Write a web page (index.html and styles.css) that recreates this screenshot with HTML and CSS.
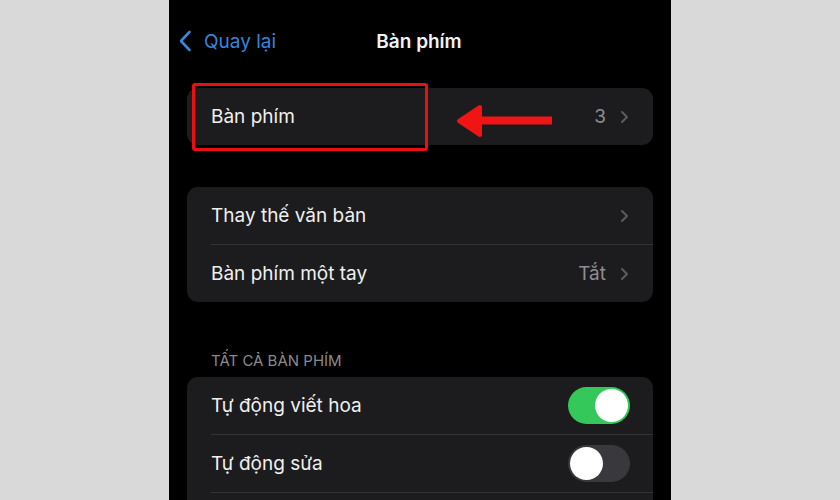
FILE: index.html
```
<!DOCTYPE html>
<html lang="vi">
<head>
    <meta charset="UTF-8">
    <title>Bàn phím</title>
    <link rel="stylesheet" href="styles.css">
</head>
<body>
<div class="phone">
    <div class="nav">
        <div class="nav-back">
            <svg class="back-icon" width="14" height="22" viewBox="0 0 14 22">
                <path d="M11.5 2 L3 11 L11.5 20" fill="none" stroke="#3a84dc" stroke-width="2.6" stroke-linecap="round" stroke-linejoin="round"/>
            </svg>
            <span>Quay lại</span>
        </div>
        <div class="nav-title">Bàn phím</div>
        <div></div>
    </div>

    <div class="card first">
        <div class="row">
            <div class="row-body">
                <span class="label">Bàn phím</span>
                <span class="value">3</span>
                <svg class="chev" width="9" height="14" viewBox="0 0 9 14"><path d="M2 2 L7 7 L2 12" fill="none" stroke="#5c5c60" stroke-width="2" stroke-linecap="round" stroke-linejoin="round"/></svg>
            </div>
        </div>
    </div>

    <div class="card">
        <div class="row">
            <div class="row-body">
                <span class="label">Thay thế văn bản</span>
                <svg class="chev" width="9" height="14" viewBox="0 0 9 14"><path d="M2 2 L7 7 L2 12" fill="none" stroke="#5c5c60" stroke-width="2" stroke-linecap="round" stroke-linejoin="round"/></svg>
            </div>
        </div>
        <div class="row">
            <div class="row-body">
                <span class="label">Bàn phím một tay</span>
                <span class="value">Tắt</span>
                <svg class="chev" width="9" height="14" viewBox="0 0 9 14"><path d="M2 2 L7 7 L2 12" fill="none" stroke="#5c5c60" stroke-width="2" stroke-linecap="round" stroke-linejoin="round"/></svg>
            </div>
        </div>
    </div>

    <div class="section-title">TẤT CẢ BÀN PHÍM</div>
    <div class="card">
        <div class="row">
            <div class="row-body">
                <span class="label">Tự động viết hoa</span>
                <span class="toggle on"><span class="knob"></span></span>
            </div>
        </div>
        <div class="row">
            <div class="row-body">
                <span class="label">Tự động sửa</span>
                <span class="toggle"><span class="knob"></span></span>
            </div>
        </div>
        <div class="row">
            <div class="row-body"></div>
        </div>
    </div>

    <!-- chu thich mau do -->
    <div class="mark-box"></div>
    <svg class="mark-arrow" width="98" height="32" viewBox="0 0 98 32">
        <rect x="18" y="11.5" width="78" height="8" fill="#f01414"/>
        <path d="M3 16 L24 2 L24 30 Z" fill="#f01414" stroke="#f01414" stroke-width="4" stroke-linejoin="round"/>
    </svg>
</div>
</body>
</html>
```

FILE: styles.css
```
html, body {
    margin: 0;
    padding: 0;
}

body {
    background: #d9d9d9;
    font-family: Inter, "Noto Sans", "DejaVu Sans", sans-serif;
}

.phone {
    position: relative;
    width: 502px;
    height: 500px;
    margin: 0 auto;
    padding: 0 18px;
    box-sizing: border-box;
    background: #000;
    overflow: hidden;
}

.nav {
    height: 82px;
    display: grid;
    grid-template-columns: 1fr auto 1fr;
    align-items: center;
    margin-left: -9px;
    margin-right: 9px;
}

.nav-back {
    display: flex;
    align-items: center;
    gap: 12px;
    color: #3a84dc;
    font-size: 19px;
}

.back-icon {
    display: block;
}

.nav-title {
    color: #f2f2f2;
    font-size: 19px;
    font-weight: 600;
    padding-left: 16px;
}

.card {
    background: #1c1c1e;
    border-radius: 11px;
    margin-top: 42px;
    overflow: hidden;
}

.card.first {
    margin-top: 6px;
}

.row {
    padding-left: 24px;
}

.row-body {
    height: 57px;
    display: flex;
    align-items: center;
    padding-right: 24px;
}

.row + .row .row-body {
    border-top: 1px solid #333336;
}

.label {
    flex: 1;
    color: #f0f0f0;
    font-size: 19px;
}

.value {
    color: #8e8e93;
    font-size: 19px;
    margin-right: 14px;
}

.chev {
    display: block;
}

.section-title {
    margin-top: 48px;
    margin-bottom: 5px;
    padding-left: 24px;
    line-height: 22px;
    color: #8a8a8e;
    font-size: 15px;
}

.section-title + .card {
    margin-top: 0;
}

.toggle {
    position: relative;
    width: 62px;
    height: 37px;
    border-radius: 19px;
    background: #39393d;
    margin-right: -1px;
}

.toggle.on {
    background: #34c759;
}

.knob {
    position: absolute;
    top: 2px;
    left: 2px;
    width: 33px;
    height: 33px;
    border-radius: 50%;
    background: #fff;
}

.toggle.on .knob {
    left: 27px;
}

.mark-box {
    position: absolute;
    left: 23px;
    top: 83px;
    width: 236px;
    height: 68px;
    box-sizing: border-box;
    border: 3.5px solid #e81010;
    border-radius: 3px;
}

.mark-arrow {
    position: absolute;
    left: 287px;
    top: 105px;
}
```
